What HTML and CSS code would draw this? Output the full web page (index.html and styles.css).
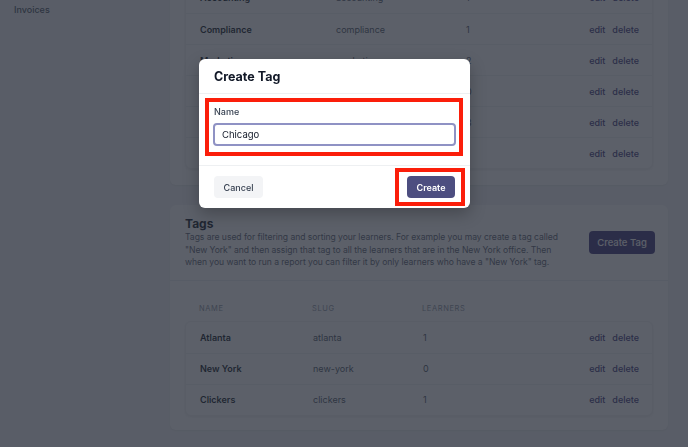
FILE: index.html
```html
<!DOCTYPE html>
<html lang="en">
<head>
<meta charset="utf-8">
<title>Tags</title>
<link rel="stylesheet" href="styles.css">
</head>
<body>
<div class="app">
  <aside class="sidebar">
    <a class="nav-item">Invoices</a>
  </aside>
  <main class="main">
    <section class="card card-top">
      <div class="table-card">
        <div class="row cols-a"><span class="c-name">Accounting</span><span class="c-slug">accounting</span><span class="c-num">1</span><span class="c-act"><a>edit</a><a>delete</a></span></div>
        <div class="row cols-a"><span class="c-name">Compliance</span><span class="c-slug">compliance</span><span class="c-num">1</span><span class="c-act"><a>edit</a><a>delete</a></span></div>
        <div class="row cols-a"><span class="c-name">Marketing</span><span class="c-slug">marketing</span><span class="c-num">2</span><span class="c-act"><a>edit</a><a>delete</a></span></div>
        <div class="row cols-a"><span class="c-name">Operations</span><span class="c-slug">operations</span><span class="c-num">0</span><span class="c-act"><a>edit</a><a>delete</a></span></div>
        <div class="row cols-a"><span class="c-name">Sales</span><span class="c-slug">sales</span><span class="c-num">3</span><span class="c-act"><a>edit</a><a>delete</a></span></div>
        <div class="row cols-a"><span class="c-name">Support</span><span class="c-slug">support</span><span class="c-num">1</span><span class="c-act"><a>edit</a><a>delete</a></span></div>
      </div>
    </section>

    <section class="card">
      <div class="card-header">
        <div class="header-text">
          <h2>Tags</h2>
          <p>Tags are used for filtering and sorting your learners. For example you may create a tag called "New York" and then assign that tag to all the learners that are in the New York office. Then when you want to run a report you can filter it by only learners who have a "New York" tag.</p>
        </div>
        <button class="btn-primary">Create Tag</button>
      </div>
      <div class="card-body">
        <div class="thead cols-b"><span>Name</span><span>Slug</span><span>Learners</span><span></span></div>
        <div class="table-card">
          <div class="row cols-b"><span class="c-name">Atlanta</span><span class="c-slug">atlanta</span><span class="c-num">1</span><span class="c-act"><a>edit</a><a>delete</a></span></div>
          <div class="row cols-b"><span class="c-name">New York</span><span class="c-slug">new-york</span><span class="c-num">0</span><span class="c-act"><a>edit</a><a>delete</a></span></div>
          <div class="row cols-b"><span class="c-name">Clickers</span><span class="c-slug">clickers</span><span class="c-num">1</span><span class="c-act"><a>edit</a><a>delete</a></span></div>
        </div>
      </div>
    </section>
  </main>
</div>

<div class="overlay"></div>

<div class="modal">
  <div class="modal-header"><h3>Create Tag</h3></div>
  <div class="modal-body">
    <label class="field-label">Name</label>
    <div class="input">Chicago</div>
  </div>
  <div class="modal-footer">
    <button class="btn-cancel">Cancel</button>
    <button class="btn-create">Create</button>
  </div>
  <div class="mark mark-field"></div>
  <div class="mark mark-create"></div>
</div>
</body>
</html>
```

FILE: styles.css
```css
* { box-sizing: border-box; }

html, body {
  margin: 0;
  padding: 0;
  background: #f3f4f6;
  font-family: Inter, "Noto Sans", "Liberation Sans", sans-serif;
  color: #111827;
  overflow: hidden;
  height: 447px;
}

.app {
  display: flex;
  width: 688px;
}

.sidebar {
  width: 170px;
  flex: none;
  padding: 4px 14px;
}

.nav-item {
  display: block;
  font-size: 9px;
  line-height: 12px;
  font-weight: 500;
  color: #4b5563;
}

.main {
  flex: 1;
  padding: 0 20px 0 0;
  margin-top: -34px;
  display: flex;
  flex-direction: column;
  gap: 20px;
}

.card {
  background: #ffffff;
  border-radius: 6px;
  box-shadow: 0 1px 2px rgba(0, 0, 0, 0.06);
}

.card-top {
  padding: 15px 15px 16px 15px;
}

.table-card {
  background: #ffffff;
  border-radius: 6px;
  border: 1px solid #f1f2f4;
  box-shadow: 0 1px 3px rgba(0, 0, 0, 0.08);
}

.row {
  display: grid;
  align-items: center;
  height: 31px;
  padding: 0 13px 0 14px;
  font-size: 9px;
  border-top: 1px solid #f0f1f3;
}

.row:first-child { border-top: none; }

.cols-a { grid-template-columns: 136px 130px 1fr auto; }
.cols-b { grid-template-columns: 113px 110px 1fr auto; }

.c-name { font-weight: 600; color: #111827; }
.c-slug { color: #4b5563; }
.c-num { color: #4b5563; }

.c-act {
  display: flex;
  gap: 7px;
  font-weight: 500;
}

.c-act a { color: #3f397c; }

.card-header {
  display: flex;
  align-items: center;
  justify-content: space-between;
  padding: 11px 13px 11px 15px;
  border-bottom: 1px solid #eceef1;
}

.header-text { width: 383px; }

.header-text h2 {
  margin: 0;
  font-size: 12px;
  line-height: 15px;
  font-weight: 700;
  color: #111827;
}

.header-text p {
  margin: 0;
  font-size: 8.6px;
  line-height: 12.5px;
  letter-spacing: -0.05px;
  color: #5b6270;
}

.btn-primary {
  border: none;
  background: #3f377b;
  color: #ffffff;
  font-family: inherit;
  font-size: 9.5px;
  font-weight: 500;
  width: 66px;
  height: 23px;
  border-radius: 4px;
  padding: 0;
}

.card-body {
  padding: 23px 15px 14px 15px;
}

.thead {
  display: grid;
  padding: 0 13px 0 14px;
  font-size: 7.5px;
  line-height: 10px;
  letter-spacing: 0.08em;
  text-transform: uppercase;
  color: #8b92a0;
  margin-bottom: 7px;
}

.overlay {
  position: fixed;
  inset: 0;
  background: rgba(38, 43, 55, 0.75);
}

.modal {
  position: absolute;
  left: 199px;
  top: 59px;
  width: 271px;
  background: #ffffff;
  border-radius: 6px;
  box-shadow: 0 6px 16px rgba(0, 0, 0, 0.25);
}

.modal-header {
  height: 35px;
  padding: 0 15px;
  display: flex;
  align-items: center;
  border-bottom: 1px solid #eef0f2;
}

.modal-header h3 {
  margin: 0;
  font-size: 12.5px;
  font-weight: 700;
  color: #111827;
}

.modal-body {
  padding: 12px 14px 19px 14px;
  border-bottom: 1px solid #eef0f2;
}

.field-label {
  display: block;
  font-size: 9px;
  line-height: 12px;
  font-weight: 500;
  color: #374151;
  margin: 0 0 5px 1px;
}

.input {
  height: 23px;
  border: 2px solid #8f92c4;
  border-radius: 4px;
  padding: 0 7px;
  font-size: 9.5px;
  line-height: 19px;
  color: #111827;
}

.modal-footer {
  display: flex;
  justify-content: space-between;
  align-items: center;
  padding: 10px 15px;
}

.btn-cancel,
.btn-create {
  border: none;
  font-family: inherit;
  font-size: 9px;
  height: 22px;
  border-radius: 4px;
  padding: 0;
}

.btn-cancel {
  width: 49px;
  background: #f3f4f6;
  color: #374151;
  font-weight: 500;
}

.btn-create {
  width: 48px;
  background: #4d4e80;
  color: #ffffff;
  font-weight: 600;
}

.mark {
  position: absolute;
  border: 4px solid #fb1e0a;
}

.mark-field {
  left: 6px;
  top: 39px;
  width: 258px;
  height: 58px;
}

.mark-create {
  left: 196px;
  top: 109px;
  width: 70px;
  height: 38px;
}
```
